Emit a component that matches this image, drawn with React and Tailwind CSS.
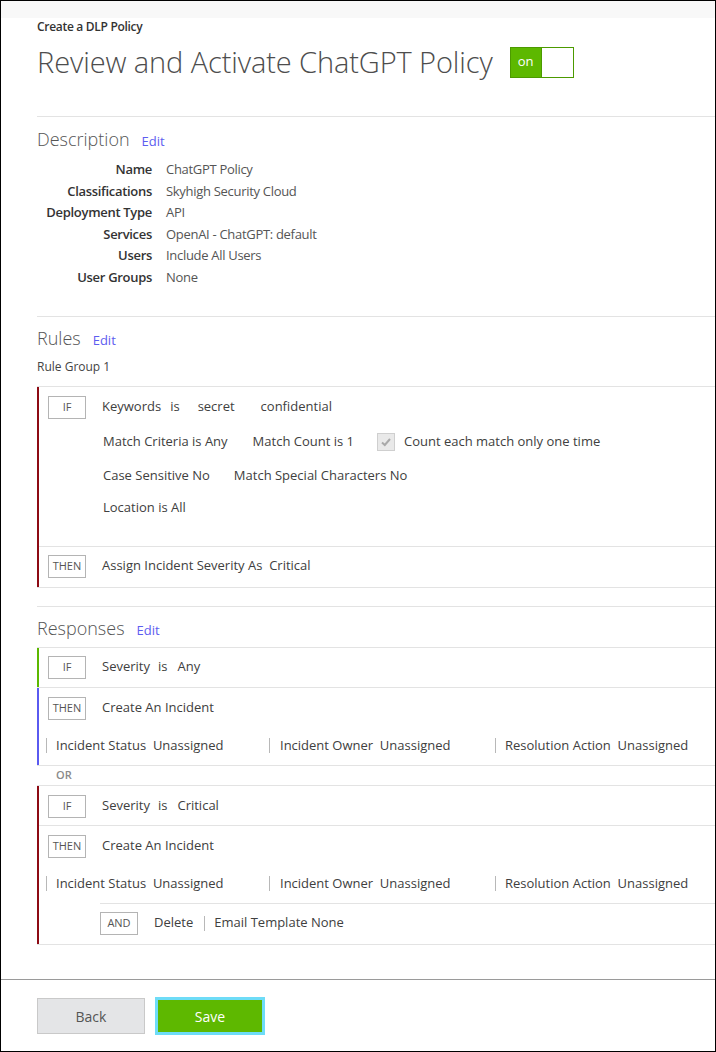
import React from "react";

const Badge = ({ children }) => (
  <div className="w-[38px] h-[23px] shrink-0 border border-[#b4b4b4] flex items-center justify-center text-[11px] text-[#555] bg-white tracking-normal">
    {children}
  </div>
);

const Pipe = () => <span className="inline-block w-px h-[15px] bg-[#b8b8b8]"></span>;

const SectionTitle = ({ title }) => (
  <div className="flex items-baseline h-[24px]">
    <span className="text-[18px] font-light text-[#555] leading-[24px]">{title}</span>
    <span className="ml-[12px] text-[13px] text-[#5d5df0]">Edit</span>
  </div>
);

const IncidentRow = () => (
  <div className="flex items-center h-[16px] text-[13px] text-[#404040] pl-[7px]">
    <div className="w-[223px] flex items-center">
      <Pipe />
      <span className="ml-[9px]">Incident Status&nbsp; Unassigned</span>
    </div>
    <div className="w-[226px] flex items-center">
      <Pipe />
      <span className="ml-[10px]">Incident Owner&nbsp; Unassigned</span>
    </div>
    <div className="flex items-center">
      <Pipe />
      <span className="ml-[9px]">Resolution Action&nbsp; Unassigned</span>
    </div>
  </div>
);

const Condition = ({ value }) => (
  <span className="ml-[16px] text-[13px] text-[#404040] flex items-center">
    <span>Severity</span>
    <span className="ml-[8px]">is</span>
    <span className="ml-[10px]">{value}</span>
  </span>
);

const details = [
  ["Name", "ChatGPT Policy"],
  ["Classifications", "Skyhigh Security Cloud"],
  ["Deployment Type", "API"],
  ["Services", "OpenAI - ChatGPT: default"],
  ["Users", "Include All Users"],
  ["User Groups", "None"],
];

export default function App() {
  return (
    <div className="h-[1052px] box-border border border-black bg-white flex flex-col font-['Open_Sans',sans-serif]">
      <div className="h-[17px] bg-[#f8f8f8] shrink-0"></div>

      <div className="flex-1 pl-[36px]">
        <div className="mt-[1px] text-[12px] leading-[16px] font-semibold text-[#333] tracking-[-0.3px]">Create a DLP Policy</div>

        <div className="mt-[11px] flex items-center h-[32px]">
          <h1 className="text-[29px] font-light text-[#4d4d4d] leading-[32px] tracking-[-0.1px]">
            Review and Activate ChatGPT Policy
          </h1>
          <div className="ml-[17px] w-[64px] h-[31px] border border-[#4c9a00] flex">
            <div className="w-[30px] bg-[#5db800] flex items-center justify-center text-white text-[13px]">on</div>
            <div className="flex-1 border-l border-[#4c9a00] bg-white"></div>
          </div>
        </div>

        {/* Description */}
        <div className="mt-[38px] border-t border-[#e3e3e3] pt-[10px]">
          <SectionTitle title="Description" />
          <div className="mt-[8px] grid grid-cols-[115px_1fr] gap-x-[14px] text-[13px] pb-[27px] tracking-[-0.3px]">
            {details.map(([k, v]) => (
              <React.Fragment key={k}>
                <div className="h-[21.6px] leading-[21.6px] text-right font-semibold text-[#333]">{k}</div>
                <div className="h-[21.6px] leading-[21.6px] text-[#555]">{v}</div>
              </React.Fragment>
            ))}
          </div>
        </div>

        {/* Rules */}
        <div className="border-t border-[#e3e3e3] pt-[9px]">
          <SectionTitle title="Rules" />
          <div className="mt-[9px] text-[12px] leading-[16px] text-[#444]">Rule Group 1</div>

          <div className="mt-[11px] border-t border-b border-[#e3e3e3]">
            <div className="border-l-2 border-[#8d0b14]">
              <div className="flex pl-[9px] pt-[9px] pb-[28px]">
                <Badge>IF</Badge>
                <div className="ml-[16px] flex-1 text-[13px] text-[#404040]">
                  <div className="h-[23px] flex items-center">
                    <span>Keywords</span>
                    <span className="ml-[9px]">is</span>
                    <span className="ml-[18px]">secret</span>
                    <span className="ml-[26px]">confidential</span>
                  </div>
                  <div className="mt-[13px] h-[20px] flex items-center">
                    <span className="ml-[1px]">Match Criteria is Any</span>
                    <span className="ml-[25px]">Match Count is 1</span>
                    <span className="ml-[23px] w-[18px] h-[18px] border border-[#cfcfcf] bg-[#e9e9e9] flex items-center justify-center">
                      <svg width="12" height="12" viewBox="0 0 12 12">
                        <path d="M2 6.5 L4.8 9 L10 3" fill="none" stroke="#a9a9a9" strokeWidth="2" />
                      </svg>
                    </span>
                    <span className="ml-[9px]">Count each match only one time</span>
                  </div>
                  <div className="mt-[14px] h-[20px] flex items-center">
                    <span className="ml-[1px]">Case Sensitive No</span>
                    <span className="ml-[24px]">Match Special Characters No</span>
                  </div>
                  <div className="mt-[12px] h-[20px] flex items-center">
                    <span className="ml-[1px]">Location is All</span>
                  </div>
                </div>
              </div>
              <div className="border-t border-[#e3e3e3] flex items-center pl-[9px] pt-[8px] pb-[9px]">
                <Badge>THEN</Badge>
                <span className="ml-[16px] text-[13px] text-[#404040]">Assign Incident Severity As&nbsp; Critical</span>
              </div>
            </div>
          </div>
        </div>

        {/* Responses */}
        <div className="mt-[18px] border-t border-[#e3e3e3] pt-[9px]">
          <SectionTitle title="Responses" />

          <div className="mt-[7px] border-t border-[#e3e3e3]">
            <div className="border-l-2 border-[#5cb800] flex items-center pl-[9px] pt-[8px] pb-[8px]">
              <Badge>IF</Badge>
              <Condition value="Any" />
            </div>
            <div className="border-t border-[#e3e3e3]">
              <div className="border-l-2 border-[#5a5af0] pt-[9px] pb-[11px]">
                <div className="flex items-center pl-[9px]">
                  <Badge>THEN</Badge>
                  <span className="ml-[16px] text-[13px] text-[#404040]">Create An Incident</span>
                </div>
                <div className="mt-[18px]">
                  <IncidentRow />
                </div>
              </div>
            </div>
          </div>

          <div className="border-t border-[#e3e3e3] h-[20px] flex items-center pl-[19px] text-[11px] font-semibold text-[#8a8a8a]">
            OR
          </div>

          <div className="border-t border-b border-[#e3e3e3]">
            <div className="border-l-2 border-[#8d0b14]">
              <div className="flex items-center pl-[9px] pt-[9px] pb-[7px]">
                <Badge>IF</Badge>
                <Condition value="Critical" />
              </div>
              <div className="border-t border-[#e3e3e3] pt-[9px] pb-[11px]">
                <div className="flex items-center pl-[9px]">
                  <Badge>THEN</Badge>
                  <span className="ml-[16px] text-[13px] text-[#404040]">Create An Incident</span>
                </div>
                <div className="mt-[18px]">
                  <IncidentRow />
                </div>
              </div>
              <div className="ml-[61px] border-t border-[#e3e3e3] flex items-center pt-[8px] pb-[9px] text-[13px] text-[#404040]">
                <Badge>AND</Badge>
                <span className="ml-[16px]">Delete</span>
                <span className="ml-[11px] flex items-center"><Pipe /></span>
                <span className="ml-[9px]">Email Template None</span>
              </div>
            </div>
          </div>
        </div>
      </div>

      <div className="h-[72px] shrink-0 border-t border-[#9a9a9a] pl-[36px] pt-[17px] flex items-start gap-[10px]">
        <button className="mt-[1px] w-[108px] h-[36px] bg-[#e4e5e7] border border-[#c9c9c9] text-[14px] text-[#555]">Back</button>
        <button className="w-[110px] h-[38px] border-[3px] border-[#6edcf7] bg-[#5eb800] text-[14px] text-white">Save</button>
      </div>
    </div>
  );
}
